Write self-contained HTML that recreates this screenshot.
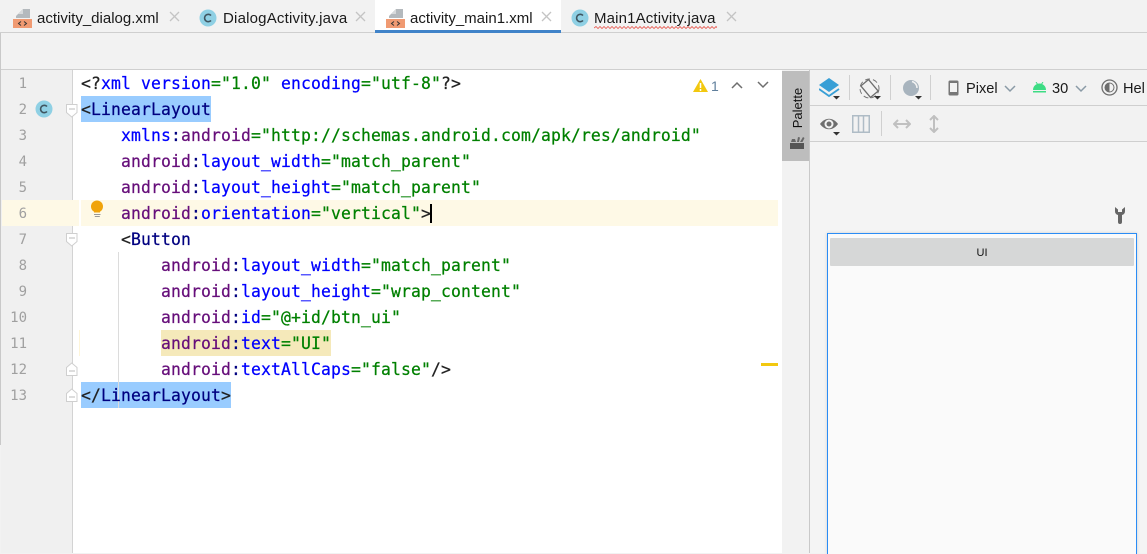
<!DOCTYPE html>
<html><head><meta charset="utf-8">
<style>
html,body{margin:0;padding:0}
body{width:1147px;height:553px;overflow:hidden;position:relative;background:#f2f2f2;font-family:"Liberation Sans",sans-serif}
.a{position:absolute}
.tab{position:absolute;top:9px;font-size:15px;line-height:20px;color:#1a1a1a;white-space:nowrap}
.x{position:absolute;top:11px;width:11px;height:11px}
.ln{position:absolute;width:27px;left:0;text-align:right;font:14px/26px "DejaVu Sans Mono",monospace;color:#a0a0a0;letter-spacing:0}
.c{position:absolute;left:81px;font:16.4px/26px "DejaVu Sans Mono",monospace;white-space:pre;letter-spacing:.13px;height:26px;-webkit-text-stroke:.25px currentColor}
.t{color:#000080}.n{color:#660e7a}.b{color:#0000ff}.g{color:#008000}.k{color:#222}
.sep{position:absolute;width:1px;background:#d0d0d0}
</style></head><body>
<!-- tabs -->
<div class="a" style="left:0;top:0;width:1147px;height:32px;background:#f2f2f2"></div>
<div class="a" style="left:0;top:32px;width:1147px;height:1px;background:#cfcfcf"></div>
<div class="a" style="left:375px;top:0;width:186px;height:30px;background:#fff"></div>
<div class="a" style="left:375px;top:30px;width:186px;height:4px;background:#4083c9"></div>

<svg class="a" style="left:13px;top:9px" width="20" height="20"><path d="M10 0h7v9H3V7z" fill="#b4b9bd"/><path d="M10 0v5H5z" fill="#d8dadc"/><rect y="10" width="19" height="9" fill="#f09a72"/><path d="M8 12.500l-2.500 2 2.500 2M11 12.500l2.500 2-2.500 2" stroke="#333" fill="none"/></svg>
<div class="tab" style="left:37px">activity_dialog.xml</div>
<svg class="x" style="left:169px"><path d="M1 1l9 9M10 1l-9 9" stroke="#c4c4c4" stroke-width="1.300"/></svg>
<svg class="a" style="left:199px;top:9px" width="18" height="18"><circle cx="9" cy="9" r="8.500" fill="#8fd0e4"/><path d="M12 6.500a3.700 3.700 0 1 0 0 5" fill="none" stroke="#3f5560" stroke-width="1.600"/></svg>
<div class="tab" style="left:223px;letter-spacing:.2px">DialogActivity.java</div>
<svg class="x" style="left:355px"><path d="M1 1l9 9M10 1l-9 9" stroke="#c4c4c4" stroke-width="1.300"/></svg>

<svg class="a" style="left:386px;top:9px" width="20" height="20"><path d="M10 0h7v9H3V7z" fill="#b4b9bd"/><path d="M10 0v5H5z" fill="#d8dadc"/><rect y="10" width="19" height="9" fill="#f09a72"/><path d="M8 12.500l-2.500 2 2.500 2M11 12.500l2.500 2-2.500 2" stroke="#333" fill="none"/></svg>
<div class="tab" style="left:410px">activity_main1.xml</div>
<svg class="x" style="left:541px"><path d="M1 1l9 9M10 1l-9 9" stroke="#c4c4c4" stroke-width="1.300"/></svg>
<svg class="a" style="left:571px;top:9px" width="18" height="18"><circle cx="9" cy="9" r="8.500" fill="#8fd0e4"/><path d="M12 6.500a3.700 3.700 0 1 0 0 5" fill="none" stroke="#3f5560" stroke-width="1.600"/></svg>
<div class="tab" style="left:594px;letter-spacing:.15px">Main1Activity.java</div>
<svg class="a" style="left:594px;top:26px" width="123" height="4"><path d="M0 2l2-1.500 2 2 2-2 2 2 2-2 2 2 2-2 2 2 2-2 2 2 2-2 2 2 2-2 2 2 2-2 2 2 2-2 2 2 2-2 2 2 2-2 2 2 2-2 2 2 2-2 2 2 2-2 2 2 2-2 2 2 2-2 2 2 2-2 2 2 2-2 2 2 2-2 2 2 2-2 2 2 2-2 2 2 2-2 2 2 2-2 2 2 2-2 2 2 2-2 2 2 2-2 2 2 2-2 2 2 2-2 2 2 2-2 2 2 2-2 2 2 2-2 2 2 2-2 2 2 2-2 2 2 2-2 2 2" stroke="#e8584f" fill="none" stroke-width=".8"/></svg>
<svg class="x" style="left:726px"><path d="M1 1l9 9M10 1l-9 9" stroke="#c4c4c4" stroke-width="1.300"/></svg>

<!-- toolbar -->
<div class="a" style="left:0;top:33px;width:1147px;height:36px;background:#f2f2f2"></div>
<div class="a" style="left:0;top:69px;width:1147px;height:1px;background:#cfcfcf"></div>

<!-- left edge + gutter -->
<div class="a" style="left:0;top:33px;width:1px;height:412px;background:#c9c9c9"></div>
<div class="a" style="left:1px;top:70px;width:71px;height:483px;background:#f0f0f0"></div>
<div class="a" style="left:72px;top:70px;width:1px;height:483px;background:#d3d3d3"></div>
<div class="a" style="left:73px;top:70px;width:709px;height:483px;background:#fff"></div>

<!-- highlights -->
<div class="a" style="left:2px;top:200px;width:77px;height:26px;background:#fef9e6"></div>
<div class="a" style="left:81px;top:200px;width:697px;height:26px;background:#fef9e6"></div>
<div class="a" style="left:81px;top:96px;width:130px;height:26px;background:#99ccff"></div>
<div class="a" style="left:81px;top:382px;width:150px;height:26px;background:#99ccff"></div>
<div class="a" style="left:161px;top:330px;width:170px;height:26px;background:#f5e9ba"></div>
<div class="a" style="left:79px;top:330px;width:1px;height:26px;background:#fef5d8"></div>
<div class="a" style="left:118px;top:252px;width:1px;height:156px;background:#dcdcdc"></div>

<!-- line numbers -->
<div class="ln" style="top:71px">1</div>
<div class="ln" style="top:97px">2</div>
<div class="ln" style="top:123px">3</div>
<div class="ln" style="top:149px">4</div>
<div class="ln" style="top:175px">5</div>
<div class="ln" style="top:201px">6</div>
<div class="ln" style="top:227px">7</div>
<div class="ln" style="top:253px">8</div>
<div class="ln" style="top:279px">9</div>
<div class="ln" style="top:305px">10</div>
<div class="ln" style="top:331px">11</div>
<div class="ln" style="top:357px">12</div>
<div class="ln" style="top:383px">13</div>

<svg class="a" style="left:35px;top:100px" width="18" height="18"><circle cx="9" cy="9" r="8.500" fill="#8fd0e4"/><path d="M12 6.500a3.700 3.700 0 1 0 0 5" fill="none" stroke="#3f5560" stroke-width="1.600"/></svg>

<!-- fold markers -->
<svg class="a" style="left:66px;top:104px" width="12" height="14"><path d="M.5.500h10.500v8l-5.250 4.500L.5 8.500z" fill="#fff" stroke="#cfcfcf"/><path d="M3 5h6" stroke="#bbb"/></svg>
<svg class="a" style="left:66px;top:233px" width="12" height="14"><path d="M.5.500h10.500v8l-5.250 4.500L.5 8.500z" fill="#fff" stroke="#cfcfcf"/><path d="M3 5h6" stroke="#bbb"/></svg>
<svg class="a" style="left:66px;top:362px" width="12" height="14"><path d="M.5 13.500h10.500v-8L5.750 1 .5 5.500z" fill="#fff" stroke="#cfcfcf"/><path d="M3 9h6" stroke="#bbb"/></svg>
<svg class="a" style="left:66px;top:388px" width="12" height="14"><path d="M.5 13.500h10.500v-8L5.750 1 .5 5.500z" fill="#fff" stroke="#cfcfcf"/><path d="M3 9h6" stroke="#bbb"/></svg>

<!-- bulb -->
<svg class="a" style="left:90px;top:200px" width="15" height="19"><circle cx="7" cy="6.500" r="6" fill="#f0a30a"/><path d="M4 10h6v2.500H4z" fill="#f0a30a"/><path d="M4 14.500h6.500M4.800 16.500h5" stroke="#999" stroke-width="1"/></svg>

<!-- code -->
<div class="c" style="top:71px"><span class="k">&lt;?</span><span class="b">xml version</span><span class="g">="1.0"</span> <span class="b">encoding</span><span class="g">="utf-8"</span><span class="k">?&gt;</span></div>
<div class="c" style="top:97px"><span class="k">&lt;</span><span class="t">LinearLayout</span></div>
<div class="c" style="top:123px">    <span class="b">xmlns</span><span class="t">:</span><span class="n">android</span><span class="g">="http://schemas.android.com/apk/res/android"</span></div>
<div class="c" style="top:149px">    <span class="n">android</span><span class="t">:</span><span class="b">layout_width</span><span class="g">="match_parent"</span></div>
<div class="c" style="top:175px">    <span class="n">android</span><span class="t">:</span><span class="b">layout_height</span><span class="g">="match_parent"</span></div>
<div class="c" style="top:201px">    <span class="n">android</span><span class="t">:</span><span class="b">orientation</span><span class="g">="vertical"</span><span class="k">&gt;</span></div>
<div class="a" style="left:430px;top:204px;width:2px;height:19px;background:#000"></div>
<div class="c" style="top:227px">    <span class="k">&lt;</span><span class="t">Button</span></div>
<div class="c" style="top:253px">        <span class="n">android</span><span class="t">:</span><span class="b">layout_width</span><span class="g">="match_parent"</span></div>
<div class="c" style="top:279px">        <span class="n">android</span><span class="t">:</span><span class="b">layout_height</span><span class="g">="wrap_content"</span></div>
<div class="c" style="top:305px">        <span class="n">android</span><span class="t">:</span><span class="b">id</span><span class="g">="@+id/btn_ui"</span></div>
<div class="c" style="top:331px">        <span class="n">android</span><span class="t">:</span><span class="b">text</span><span class="g">="UI"</span></div>
<div class="c" style="top:357px">        <span class="n">android</span><span class="t">:</span><span class="b">textAllCaps</span><span class="g">="false"</span><span class="k">/&gt;</span></div>
<div class="c" style="top:383px"><span class="k">&lt;/</span><span class="t">LinearLayout</span><span class="k">&gt;</span></div>

<!-- inspection widget -->
<svg class="a" style="left:693px;top:79px" width="15" height="13"><path d="M7.500 0L15 13H0z" fill="#f2c80f"/><path d="M7.500 4v5M7.500 10v2" stroke="#fff" stroke-width="1.500"/></svg>
<div class="a" style="left:711px;top:76px;font-size:14px;line-height:20px;color:#5f7f9c">1</div>
<svg class="a" style="left:731px;top:81px" width="12" height="8"><path d="M1 7l5-5 5 5" stroke="#6e6e6e" fill="none" stroke-width="1.500"/></svg>
<svg class="a" style="left:757px;top:81px" width="12" height="8"><path d="M1 1l5 5 5-5" stroke="#6e6e6e" fill="none" stroke-width="1.500"/></svg>
<div class="a" style="left:761px;top:363px;width:17px;height:3px;background:#f2c80f"></div>

<!-- palette strip -->
<div class="a" style="left:782px;top:70px;width:27px;height:483px;background:#f2f2f2"></div>
<div class="a" style="left:782px;top:71px;width:27px;height:90px;background:#bdbdbd"></div>
<div class="a" style="left:809px;top:70px;width:1px;height:483px;background:#c9c9c9"></div>
<div class="a" style="left:758px;top:98px;width:80px;height:20px;line-height:20px;font-size:13px;color:#111;text-align:center;transform:rotate(-90deg)">Palette</div>
<svg class="a" style="left:790px;top:134px" width="15" height="16"><rect y="9" width="14" height="6" fill="#555"/><path d="M1 8l1-3h3l1 3zM7 8l1-5 2 .5-1 4.500zM10 8l3-5 1.500 1-2 4z" fill="#666"/></svg>

<!-- right panel -->
<div class="a" style="left:810px;top:70px;width:337px;height:35px;background:#f2f2f2"></div>
<div class="a" style="left:810px;top:105px;width:337px;height:1px;background:#cfcfcf"></div>
<div class="a" style="left:810px;top:106px;width:337px;height:35px;background:#f2f2f2"></div>
<div class="a" style="left:810px;top:141px;width:337px;height:1px;background:#cfcfcf"></div>
<div class="a" style="left:810px;top:142px;width:337px;height:411px;background:#f4f4f4"></div>

<svg class="a" style="left:819px;top:78px" width="22" height="22"><path d="M10 0l10 7-10 7L0 7z" fill="#389fd6"/><path d="M0 11l10 7 10-7" fill="none" stroke="#389fd6" stroke-width="1.800"/><path d="M14 18h7l-3.500 3.500z" fill="#333"/></svg>
<div class="sep" style="left:849px;top:75px;height:25px"></div>
<svg class="a" style="left:859px;top:78px" width="24" height="22"><circle cx="10.500" cy="10.500" r="9.500" fill="none" stroke="#777" stroke-dasharray="5 3"/><rect x="5.500" y="3" width="10" height="15" fill="#f2f2f2" stroke="#6e6e6e" stroke-width="1.300" transform="rotate(-40 10.500 10.500)"/><path d="M15 18h7l-3.500 3.500z" fill="#333"/></svg>
<div class="sep" style="left:890px;top:75px;height:25px"></div>
<svg class="a" style="left:902px;top:79px" width="22" height="21"><circle cx="9" cy="9" r="8" fill="#a8b4be"/><path d="M10 2.500a6.500 6.500 0 0 1 5 6.500" stroke="#f2f2f2" fill="none" stroke-width="1.500"/><path d="M13 17h7l-3.500 3.500z" fill="#333"/></svg>
<div class="sep" style="left:930px;top:75px;height:25px"></div>
<svg class="a" style="left:948px;top:80px" width="11" height="16"><rect x=".5" y=".5" width="10" height="15" rx="1.500" fill="#777"/><rect x="2" y="3" width="7" height="9" fill="#f2f2f2"/></svg>
<div class="a" style="left:966px;top:79px;font-size:14.600px;line-height:20px;color:#1a1a1a">Pixel</div>
<svg class="a" style="left:1004px;top:85px" width="12" height="8"><path d="M1 1l5 5 5-5" stroke="#8a9aa6" fill="none" stroke-width="1.500"/></svg>
<svg class="a" style="left:1032px;top:82px" width="15" height="12"><path d="M1 8a6.500 6.500 0 0 1 13 0z" fill="#3ddc84"/><rect x="1" y="9" width="13" height="1.500" fill="#3ddc84"/><path d="M4 0l2 3M11 0L9 3" stroke="#3ddc84"/></svg>
<div class="a" style="left:1052px;top:79px;font-size:14.600px;line-height:20px;color:#1a1a1a">30</div>
<svg class="a" style="left:1075px;top:85px" width="12" height="8"><path d="M1 1l5 5 5-5" stroke="#8a9aa6" fill="none" stroke-width="1.500"/></svg>
<svg class="a" style="left:1101px;top:79px" width="18" height="18"><circle cx="8.500" cy="8.500" r="7.500" fill="none" stroke="#6e6e6e" stroke-width="1.300"/><path d="M8.500 4a4.500 4.500 0 0 0 0 9z" fill="#6e6e6e"/><circle cx="8.500" cy="8.500" r="4.500" fill="none" stroke="#6e6e6e"/></svg>
<div class="a" style="left:1123px;top:79px;font-size:14.600px;line-height:20px;color:#1a1a1a">Hel</div>

<svg class="a" style="left:820px;top:115px" width="22" height="21"><path d="M0 9c5-7 13-7 18 0-5 7-13 7-18 0z" fill="#6e6e6e"/><circle cx="9" cy="9" r="4.500" fill="#f2f2f2"/><circle cx="9" cy="9" r="2.500" fill="#6e6e6e"/><path d="M13 17h7l-3.500 3.500z" fill="#333"/></svg>
<svg class="a" style="left:852px;top:115px" width="18" height="18"><rect x=".75" y=".75" width="16.500" height="16.500" fill="none" stroke="#afbcc6" stroke-width="1.500"/><path d="M6.500 1v16M11.500 1v16" stroke="#afbcc6" stroke-width="1.500"/></svg>
<div class="sep" style="left:881px;top:111px;height:25px"></div>
<svg class="a" style="left:893px;top:118px" width="18" height="12"><path d="M2 6h14M5 2L1 6l4 4M13 2l4 4-4 4" fill="none" stroke="#c0c0c0" stroke-width="2"/></svg>
<svg class="a" style="left:928px;top:115px" width="12" height="18"><path d="M6 2v14M2 5l4-4 4 4M2 13l4 4 4-4" fill="none" stroke="#c0c0c0" stroke-width="2"/></svg>

<svg class="a" style="left:1114px;top:206px" width="12" height="18"><path d="M1 1v4a4 4 0 0 0 3 4v7a2 2 0 0 0 4 0V9a4 4 0 0 0 3-4V1L8 3.500V6H4V3.500z" fill="#666"/></svg>

<!-- device -->
<div class="a" style="left:827px;top:233px;width:308px;height:320px;background:#fafafa;border:1px solid #2a8cf5;border-bottom:0;box-shadow:0 0 3px rgba(0,0,0,.15)"></div>
<div class="a" style="left:830px;top:238px;width:304px;height:28px;background:#d6d7d7;border-radius:1px"></div>
<div class="a" style="left:830px;top:246px;width:304px;text-align:center;font-size:11px;line-height:14px;color:#111">UI</div>
</body></html>
